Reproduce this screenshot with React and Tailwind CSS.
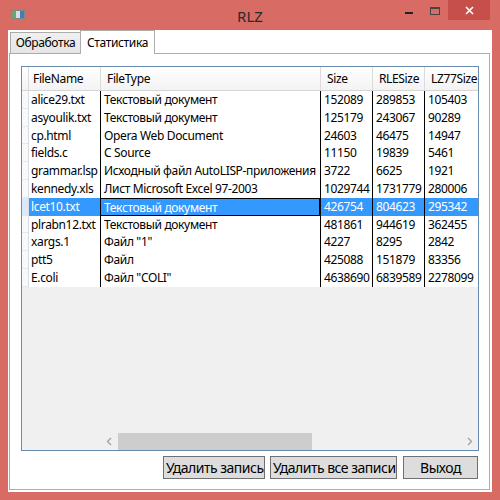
import React from 'react';

const rows = [
  ['alice29.txt', 'Текстовый документ', '152089', '289853', '105403'],
  ['asyoulik.txt', 'Текстовый документ', '125179', '243067', '90289'],
  ['cp.html', 'Opera Web Document', '24603', '46475', '14947'],
  ['fields.c', 'C Source', '11150', '19839', '5461'],
  ['grammar.lsp', 'Исходный файл AutoLISP-приложения', '3722', '6625', '1921'],
  ['kennedy.xls', 'Лист Microsoft Excel 97-2003', '1029744', '1731779', '280006'],
  ['lcet10.txt', 'Текстовый документ', '426754', '804623', '295342'],
  ['plrabn12.txt', 'Текстовый документ', '481861', '944619', '362455'],
  ['xargs.1', 'Файл "1"', '4227', '8295', '2842'],
  ['ptt5', 'Файл', '425088', '151879', '83356'],
  ['E.coli', 'Файл "COLI"', '4638690', '6839589', '2278099'],
];

const cols = 'grid grid-cols-[6px_72px_220px_52px_52px_54px]';
const headers = ['FileName', 'FileType', 'Size', 'RLESize', 'LZ77Size'];

const App = () => {
  return (
    <div className="w-[500px] h-[500px] bg-[#d86b63] flex flex-col font-['Noto_Sans',sans-serif] text-[12px] tracking-[-0.35px] text-black">
      {/* --- TITLE BAR --- */}
      <div className="h-[30px] grid grid-cols-[1fr_auto_1fr] items-start">
        <div className="ml-[11px] mt-[10px] w-[14px] h-[9px] border border-[#7a8a8a] bg-white flex">
          <div className="w-[4px] bg-[#6aa86a]" />
          <div className="w-[4px] bg-[#d8dde0]" />
          <div className="w-[4px] bg-[#4a7ab8]" />
        </div>
        <div className="pt-[5px] text-[15px] tracking-normal text-[#2a2a2a]">RLZ</div>
        <div className="flex justify-end items-start h-[20px]">
          <div className="w-[26px] h-[20px] flex items-center justify-center">
            <div className="w-[8px] h-[2px] bg-[#222] mt-[6px]" />
          </div>
          <div className="w-[26px] h-[20px] flex items-center justify-center">
            <div className="w-[10px] h-[8px] border border-[#444] border-t-2 mt-[1px]" />
          </div>
          <div className="w-[42px] h-[20px] mr-[10px] bg-[#c74f49] flex items-center justify-center">
            <svg width="9" height="9" viewBox="0 0 9 9">
              <path d="M1 1 L8 8 M8 1 L1 8" stroke="white" strokeWidth="1.6" />
            </svg>
          </div>
        </div>
      </div>

      {/* --- CLIENT AREA --- */}
      <div className="mx-[8px] h-[462px] bg-white pl-[1px] pr-[2px] pb-[2px] flex flex-col">
        {/* tabs */}
        <div className="flex items-end h-[23px] pl-[1px]">
          <div className="h-[21px] w-[71px] border border-[#acacac] border-b-0 bg-linear-to-b from-[#f0f0f0] to-[#e5e5e5] flex items-center justify-center">
            Обработка
          </div>
          <div className="h-[24px] w-[75px] border border-[#acacac] border-b-0 bg-white flex items-center justify-center -mb-[1px] relative z-10 -ml-[1px]">
            Статистика
          </div>
        </div>

        {/* tab panel */}
        <div className="flex-1 border border-[#acacac] bg-white px-[11px] pt-[12px] pb-[10px] flex flex-col">
          {/* data grid */}
          <div className="w-[458px] h-[385px] border border-[#688caf] bg-[#f0f0f0] flex flex-col">
            <div className={`${cols} h-[24px] bg-linear-to-b from-white to-[#f3f3f3] border-b border-[#d5d5d5]`}>
              <div />
              {headers.map((h, i) => (
                <div key={h} className={`border-l border-[#dcdcdc] flex items-center pt-[1px] ${i === 0 ? 'pl-[4px]' : 'pl-[6px]'}`}>
                  {h}
                </div>
              ))}
            </div>

            {rows.map((r, ri) => {
              const sel = ri === 6;
              return (
                <div key={ri} className={`${cols} h-[17.8px] leading-[18px] ${sel ? 'bg-[#3399ff] text-white' : 'bg-white'}`}>
                  <div className={`border-b border-[#e3e9ef] ${sel ? 'bg-[#dbeafb]' : 'bg-[#f9f9f9]'}`} />
                  {r.map((c, ci) => (
                    <div
                      key={ci}
                      className={`whitespace-nowrap overflow-hidden ${
                        ci === 0 ? 'border-l border-[#d6dde6] pl-[2px]' : 'border-l border-black pl-[3px]'
                      } ${sel && ci === 1 ? 'border border-[#1a2a4a] pl-[2px]' : ''}`}
                    >
                      {c}
                    </div>
                  ))}
                </div>
              );
            })}

            <div className="flex-1" />

            {/* horizontal scrollbar */}
            <div className="h-[17px] ml-[78px] flex items-center">
              <div className="w-[17px] h-[17px] flex items-center justify-center">
                <svg width="6" height="9" viewBox="0 0 6 9">
                  <path d="M5 1 L1.5 4.5 L5 8" fill="none" stroke="#a0a0a0" strokeWidth="1.3" />
                </svg>
              </div>
              <div className="flex-1 h-[17px] flex">
                <div className="w-[194px] h-[17px] ml-[1px] bg-[#cdcdcd]" />
              </div>
              <div className="w-[17px] h-[17px] flex items-center justify-center">
                <svg width="6" height="9" viewBox="0 0 6 9">
                  <path d="M1 1 L4.5 4.5 L1 8" fill="none" stroke="#a0a0a0" strokeWidth="1.3" />
                </svg>
              </div>
            </div>
          </div>

          {/* buttons */}
          <div className="flex justify-end gap-[5px] mt-[5px] text-[14px] tracking-[-0.5px]">
            <button className="h-[23px] w-[102px] border border-[#707070] bg-[#dddddd] flex items-center pl-[2px] whitespace-nowrap">
              Удалить запись
            </button>
            <button className="h-[23px] w-[127px] border border-[#707070] bg-[#dddddd] flex items-center pl-[2px] whitespace-nowrap">
              Удалить все записи
            </button>
            <button className="h-[23px] w-[75px] border border-[#707070] bg-[#dddddd] flex items-center justify-center ml-[1px]">
              Выход
            </button>
          </div>
        </div>
      </div>
    </div>
  );
};

export default App;
